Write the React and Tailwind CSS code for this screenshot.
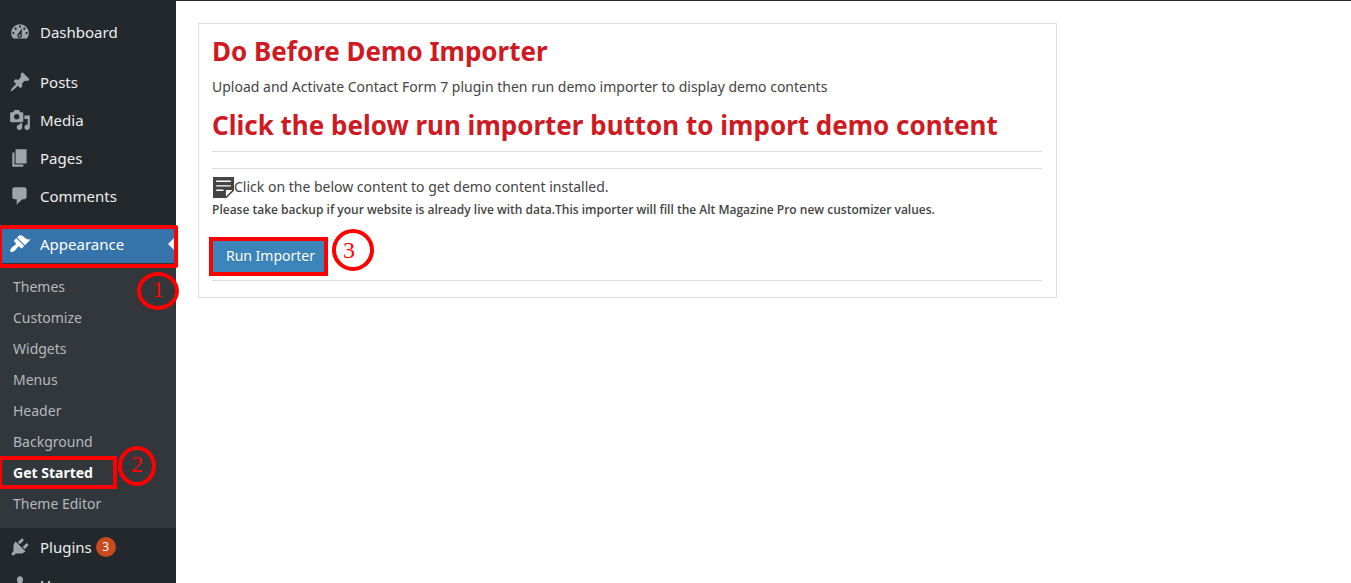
const icons = {
  dashboard:
    'M3.76 16h12.48c1.1-1.37 1.76-3.11 1.76-5 0-4.42-3.58-8-8-8s-8 3.58-8 8c0 1.89.66 3.63 1.76 5zM10 4c.55 0 1 .45 1 1s-.45 1-1 1-1-.45-1-1 .45-1 1-1zM6 6c.55 0 1 .45 1 1s-.45 1-1 1-1-.45-1-1 .45-1 1-1zM14 6c.55 0 1 .45 1 1s-.45 1-1 1-1-.45-1-1 .45-1 1-1zM4 10c.55 0 1 .45 1 1s-.45 1-1 1-1-.45-1-1 .45-1 1-1zM16 10c.55 0 1 .45 1 1s-.45 1-1 1-1-.45-1-1 .45-1 1-1zM12 6.8L8.3 11.6c-.5.4-.8 1-.8 1.6 0 1.2 1 2.1 2.2 2.1s2.2-.9 2.2-2.1c0-.5-.2-.9-.5-1.3zM9.7 12.2c.5 0 1 .4 1 1s-.5 1-1 1-1-.4-1-1 .5-1 1-1z',
  posts:
    'M10.44 3.02l1.82-1.82 6.36 6.35-1.83 1.82c-1.05-.68-2.48-.57-3.41.36l-.75.75c-.92.93-1.04 2.35-.35 3.41l-1.83 1.82-2.41-2.41-2.8 2.79c-.42.42-3.38 2.71-3.8 2.29s1.86-3.39 2.28-3.81l2.79-2.79L4.1 9.36l1.83-1.82c1.05.69 2.48.57 3.4-.36l.75-.75c.93-.92 1.05-2.35.36-3.41z',
  media:
    'M13 11V4c0-.55-.45-1-1-1h-1.67L9 1H5L3.67 3H2c-.55 0-1 .45-1 1v7c0 .55.45 1 1 1h10c.55 0 1-.45 1-1zM7 4.5c1.38 0 2.5 1.12 2.5 2.5S8.38 9.5 7 9.5 4.5 8.38 4.5 7 5.62 4.5 7 4.5zM14 6h5v10.5c0 1.38-1.12 2.5-2.5 2.5S14 17.88 14 16.5s1.12-2.5 2.5-2.5c.17 0 .34.02.5.05V9h-3V6zM10 14.05V13h2v3.5c0 1.38-1.12 2.5-2.5 2.5S7 17.88 7 16.5 8.12 14 9.5 14c.17 0 .34.02.5.05z',
  pages: 'M6 15V2h10v13H6zM5 16h8v2H3V5h2v11z',
  comments:
    'M5 2h9c1.1 0 2 .9 2 2v7c0 1.1-.9 2-2 2h-2l-5 5v-5H5c-1.1 0-2-.9-2-2V4c0-1.1.9-2 2-2z',
  appearance:
    'M14.48 11.06L7.41 3.99l1.5-1.5c.5-.56 2.3-.47 3.51.32 1.21.8 1.43 1.28 2.91 2.1 1.18.64 2.45 1.26 4.45.85zM13.77 11.77L6.7 4.7 4.93 6.47c-.39.39-.39 1.02 0 1.41l1.06 1.06c.39.39.39 1.03 0 1.42-.6.6-1.43 1.11-2.21 1.69-.35.26-.7.53-1.01.84C1.43 14.23.4 16.08 1.4 17.07c.99 1 2.84-.03 4.18-1.36.31-.31.58-.66.85-1.02.57-.78 1.08-1.61 1.69-2.21.39-.39 1.02-.39 1.41 0l1.06 1.06c.39.39 1.02.39 1.41 0z',
  plugins:
    'M13.11 4.36L9.87 7.6 8 5.73l3.24-3.24c.35-.34 1.05-.2 1.56.32.52.51.66 1.21.31 1.55zM5.11 6.13l.91-1.12 9.01 9.01-1.19.84c-.71.71-2.63 1.16-3.82 1.16H6.14L4.9 17.26c-.59.59-1.54.59-2.12 0-.59-.58-.59-1.53 0-2.12l1.24-1.24v-3.88c0-1.13.4-3.19 1.09-3.89zM12.37 10.1l3.24-3.24c.34-.35 1.04-.21 1.55.31.52.51.66 1.21.31 1.55l-3.24 3.25z',
  users:
    'M10 9.25c-2.27 0-2.73-3.44-2.73-3.44C7 4.02 7.82 2 9.97 2c2.16 0 2.98 2.02 2.71 3.81 0 0-.41 3.44-2.68 3.44zM10 11.82L12.72 10c2.39 0 4.52 2.33 4.52 4.53v2.49s-3.65 1.13-7.24 1.13c-3.65 0-7.24-1.13-7.24-1.13v-2.49c0-2.25 1.94-4.48 4.47-4.48z',
};

const contentLinks = [
  { label: 'Posts', icon: 'posts' },
  { label: 'Media', icon: 'media' },
  { label: 'Pages', icon: 'pages' },
  { label: 'Comments', icon: 'comments' },
];

const appearanceLinks = [
  'Themes',
  'Customize',
  'Widgets',
  'Menus',
  'Header',
  'Background',
  'Get Started',
  'Theme Editor',
];

function Icon({ name }) {
  return (
    <svg viewBox="0 0 20 20" className="size-[22px] shrink-0 fill-current" aria-hidden="true">
      <path fillRule="evenodd" d={icons[name]} />
    </svg>
  );
}

function MenuLink({ label, icon, active, badge }) {
  return (
    <a
      href="#"
      className={`flex h-[38px] items-center pl-[9px] text-[15px] ${
        active ? 'bg-[#3573aa] text-white' : 'text-[#eeeeee]'
      }`}
    >
      <span className={`mr-[9px] ${active ? 'text-white' : 'text-[#a0a5aa]'}`}>
        <Icon name={icon} />
      </span>
      {label}
      {badge && (
        <span className="ml-1 flex size-5 items-center justify-center rounded-full bg-[#ca4a1f] text-xs text-white">
          {badge}
        </span>
      )}
    </a>
  );
}

function StepMark({ number, className }) {
  return (
    <span
      className={`absolute z-10 flex items-center justify-center rounded-[50%] border-4 border-[#ff0000] font-['Liberation_Serif',serif] text-2xl leading-none text-[#ff0000] ${className}`}
    >
      {number}
    </span>
  );
}

function NoteIcon() {
  return (
    <svg viewBox="0 0 20 20" className="size-[21px] shrink-0" aria-hidden="true">
      <path fill="#444" d="M0 0h20v13l-7 7H0z" />
      <path stroke="#fff" strokeWidth="1.3" d="M3 4h14M3 8.4h14M3 12.6h7" />
      <path fill="#fff" d="M12.3 12.3h6.2l-6.2 6.2z" />
    </svg>
  );
}

function Sidebar() {
  return (
    <nav className="relative w-44 shrink-0 bg-[#23282d] pt-3">
      <MenuLink label="Dashboard" icon="dashboard" />
      <div className="mt-3">
        {contentLinks.map((link) => (
          <MenuLink key={link.label} {...link} />
        ))}
      </div>
      <div className="relative z-10 mt-2.5">
        <MenuLink label="Appearance" icon="appearance" active />
        <span className="absolute top-[11px] right-0 border-y-8 border-r-8 border-y-transparent border-r-[#f1f1f1]" />
        <span className="absolute top-0 -right-0.5 -bottom-[5px] left-0 rounded-xs border-4 border-l-2 border-[#ff0000]" />
      </div>
      <ul className="relative bg-[#32373c] pt-2 pb-[9px] text-sm text-[#b4b9be]">
        <StepMark number="1" className="top-[9px] -right-[3px] h-[38px] w-[42px] pb-1" />
        {appearanceLinks.map((label) =>
          label === 'Get Started' ? (
            <li key={label} className="relative">
              <a href="#" className="flex h-[31px] items-center pl-[13px] font-bold text-white">
                {label}
              </a>
              <span className="absolute -top-px -bottom-px left-0 w-[117px] border-4 border-l-2 border-[#ff0000]" />
              <StepMark number="2" className="-top-[11px] left-[118px] h-10 w-[38px] pb-1" />
            </li>
          ) : (
            <li key={label}>
              <a href="#" className="flex h-[31px] items-center pl-[13px]">
                {label}
              </a>
            </li>
          )
        )}
      </ul>
      <MenuLink label="Plugins" icon="plugins" badge="3" />
      <MenuLink label="Users" icon="users" />
    </nav>
  );
}

export default function App() {
  return (
    <div className="flex h-screen overflow-hidden border-t border-[#23282d] bg-white font-['Noto_Sans',sans-serif]">
      <Sidebar />
      <main className="min-w-0 flex-1 px-[22px] pt-[22px]">
        <section className="max-w-[859px] border border-[#dddddd] pt-[9px] pr-3.5 pb-4 pl-[13px] text-sm text-[#444444]">
          <h2 className="text-[26px] leading-9 font-bold text-[#ce1a22]">Do Before Demo Importer</h2>
          <p className="mt-1.5 leading-6">
            Upload and Activate Contact Form 7 plugin then run demo importer to display demo contents
          </p>
          <h2 className="mt-2 text-[26px] leading-9 font-bold text-[#ce1a22]">
            Click the below run importer button to import demo content
          </h2>
          <hr className="mt-2 border-[#dddddd]" />
          <hr className="mt-4 border-[#dddddd]" />
          <p className="mt-2 flex h-[22px] pl-px leading-5">
            <NoteIcon />
            Click on the below content to get demo content installed.
          </p>
          <p className="mt-px font-['Open_Sans',sans-serif] text-xs leading-5 font-semibold">
            Please take backup if your website is already live with data.This importer will fill the Alt
            Magazine Pro new customizer values.
          </p>
          <div className="relative mt-[21px] pl-px">
            <button
              type="button"
              className="block h-[31px] w-[111px] rounded-none bg-[#3c85bb] pb-0.5 pl-1 text-sm text-white outline-4 outline-[#ff0000] text-shadow-2xs"
            >
              Run Importer
            </button>
            <StepMark number="3" className="-top-3 left-[120px] size-[42px] pr-2" />
          </div>
          <hr className="mt-2 border-[#dddddd]" />
        </section>
      </main>
    </div>
  );
}
